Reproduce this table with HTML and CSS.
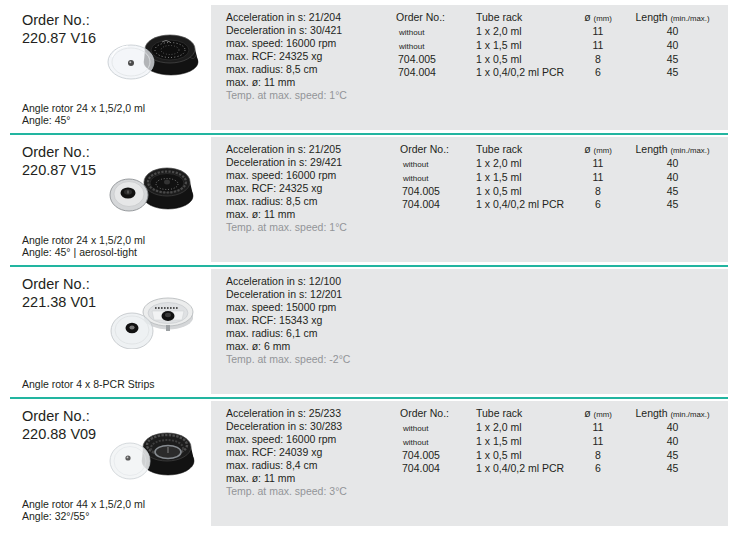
FILE: index.html
```html
<!DOCTYPE html>
<html lang="en">
<head>
<meta charset="utf-8">
<title>Angle rotors</title>
<link rel="stylesheet" href="styles.css">
</head>
<body>
<div class="page">

  <section class="row">
    <div class="left">
      <h2 class="ordno">Order No.:<br>220.87 V16</h2>
      <svg class="pic" viewBox="0 0 96 54" width="96" height="54">
        <ellipse cx="67" cy="31" rx="27" ry="13" fill="#0a0a0a" stroke="#2a2a2a" stroke-width="0.6"/>
        <path d="M41,18 L40,30 A27,13 0 0 0 94,30 L91,18 Z" fill="#121212"/>
        <path d="M86,26 Q90,30 92,24" fill="none" stroke="#3a3a3a" stroke-width="0.8"/>
        <ellipse cx="66" cy="18" rx="25" ry="14" fill="#1c1c1c" stroke="#4a4a4a" stroke-width="0.7"/>
        <ellipse cx="66" cy="19" rx="19" ry="10" fill="#0e0e0e" stroke="#2e2e2e" stroke-width="0.8"/>
        <ellipse cx="66" cy="19" rx="15" ry="7.5" fill="none" stroke="#cfcfcf" stroke-width="0.8" stroke-dasharray="0.8 2.4"/>
        <ellipse cx="66" cy="19" rx="9" ry="4.5" fill="none" stroke="#9a9a9a" stroke-width="0.6" stroke-dasharray="0.8 2"/>
        <path d="M58,11 q4,-3 8,0" fill="none" stroke="#bbb" stroke-width="0.6"/>
        <ellipse cx="27" cy="31" rx="23" ry="17" fill="rgba(240,243,246,0.72)" stroke="#c3c9ce" stroke-width="0.8"/>
        <ellipse cx="27" cy="31" rx="19" ry="14" fill="none" stroke="#dfe3e6" stroke-width="0.8"/>
        <path d="M8,26 Q12,16 24,15" fill="none" stroke="#ffffff" stroke-width="1.2"/>
        <circle cx="27" cy="32" r="3" fill="#4a4a4a"/>
        <circle cx="26.3" cy="31.2" r="1" fill="#bbb"/>
      </svg>
      <p class="desc">Angle rotor 24 x 1,5/2,0 ml<br>Angle: 45°</p>
    </div>
    <div class="panel">
      <div class="specs">
        <div>Acceleration in s: 21/204</div>
        <div>Deceleration in s: 30/421</div>
        <div>max. speed: 16000 rpm</div>
        <div>max. RCF: 24325 xg</div>
        <div>max. radius: 8,5 cm</div>
        <div>max. ø: 11 mm</div>
        <div class="muted">Temp. at max. speed: 1°C</div>
      </div>
      <div class="tbl">
        <div class="th">Order No.:</div><div class="th">Tube rack</div><div class="th c">ø <small>(mm)</small></div><div class="th c">Length <small>(min./max.)</small></div>
        <div class="no wo">without</div><div>1 x 2,0 ml</div><div class="c">11</div><div class="c">40</div>
        <div class="no wo">without</div><div>1 x 1,5 ml</div><div class="c">11</div><div class="c">40</div>
        <div class="no">704.005</div><div>1 x 0,5 ml</div><div class="c">8</div><div class="c">45</div>
        <div class="no">704.004</div><div>1 x 0,4/0,2 ml PCR</div><div class="c">6</div><div class="c">45</div>
      </div>
    </div>
  </section>
  <div class="sep"></div>

  <section class="row">
    <div class="left">
      <h2 class="ordno">Order No.:<br>220.87 V15</h2>
      <svg class="pic" viewBox="0 0 96 54" width="96" height="54">
        <ellipse cx="64" cy="33" rx="25" ry="13" fill="#0a0a0a" stroke="#2a2a2a" stroke-width="0.6"/>
        <path d="M40,19 L39,32 A25,13 0 0 0 89,32 L86,19 Z" fill="#121212"/>
        <ellipse cx="63" cy="19" rx="23" ry="14" fill="#1c1c1c" stroke="#444" stroke-width="0.7"/>
        <ellipse cx="63" cy="20" rx="17" ry="9.5" fill="#111" stroke="#2e2e2e" stroke-width="0.8"/>
        <ellipse cx="63" cy="19" rx="19" ry="10.5" fill="none" stroke="#4a4a4a" stroke-width="2.2" stroke-dasharray="2.2 1.4"/>
        <ellipse cx="63" cy="21" rx="11" ry="5.5" fill="none" stroke="#bdbdbd" stroke-width="0.7" stroke-dasharray="0.8 2"/>
        <ellipse cx="63" cy="19" rx="3" ry="2.5" fill="#333"/>
        <ellipse cx="25" cy="32" rx="19" ry="16" fill="#d5d7d9" stroke="#8f9295" stroke-width="0.9"/>
        <ellipse cx="25" cy="31" rx="15" ry="12.5" fill="#e6e7e8" stroke="#c2c4c6" stroke-width="0.6"/>
        <ellipse cx="24" cy="30" rx="7.5" ry="5.5" fill="#111"/>
        <ellipse cx="24" cy="29" rx="4" ry="2.8" fill="#2b2b2b"/>
        <rect x="23" y="27.5" width="2" height="3" fill="#555"/>
      </svg>
      <p class="desc">Angle rotor 24 x 1,5/2,0 ml<br>Angle: 45° | aerosol-tight</p>
    </div>
    <div class="panel">
      <div class="specs">
        <div>Acceleration in s: 21/205</div>
        <div>Deceleration in s: 29/421</div>
        <div>max. speed: 16000 rpm</div>
        <div>max. RCF: 24325 xg</div>
        <div>max. radius: 8,5 cm</div>
        <div>max. ø: 11 mm</div>
        <div class="muted">Temp. at max. speed: 1°C</div>
      </div>
      <div class="tbl shift">
        <div class="th">Order No.:</div><div class="th">Tube rack</div><div class="th c">ø <small>(mm)</small></div><div class="th c">Length <small>(min./max.)</small></div>
        <div class="no wo">without</div><div>1 x 2,0 ml</div><div class="c">11</div><div class="c">40</div>
        <div class="no wo">without</div><div>1 x 1,5 ml</div><div class="c">11</div><div class="c">40</div>
        <div class="no">704.005</div><div>1 x 0,5 ml</div><div class="c">8</div><div class="c">45</div>
        <div class="no">704.004</div><div>1 x 0,4/0,2 ml PCR</div><div class="c">6</div><div class="c">45</div>
      </div>
    </div>
  </section>
  <div class="sep"></div>

  <section class="row">
    <div class="left">
      <h2 class="ordno">Order No.:<br>221.38 V01</h2>
      <svg class="pic" viewBox="0 0 96 54" width="96" height="54">
        <path d="M40,17 L40,24 A25,13 0 0 0 89,24 L89,17 Z" fill="#d4d6d8"/>
        <ellipse cx="64" cy="17" rx="25" ry="14" fill="#eceded" stroke="#b4b7ba" stroke-width="0.8"/>
        <ellipse cx="64" cy="18" rx="20" ry="10.5" fill="#dfe1e3" stroke="#c5c8cb" stroke-width="0.6"/>
        <path d="M48,16 L80,16 L78,25 L50,25 Z" fill="#f1f2f3" stroke="#c9ccce" stroke-width="0.5"/>
        <line x1="51" y1="13" x2="75" y2="13" stroke="#222" stroke-width="1.6" stroke-dasharray="1.6 1.4"/>
        <rect x="62" y="30" width="4" height="6" fill="#9da1a4"/>
        <ellipse cx="64" cy="21" rx="6.5" ry="5" fill="#111"/>
        <ellipse cx="64" cy="20" rx="3" ry="2.2" fill="#3a3a3a"/>
        <ellipse cx="28" cy="36" rx="21" ry="18" fill="rgba(232,235,238,0.72)" stroke="#bfc3c7" stroke-width="0.8"/>
        <ellipse cx="28" cy="35" rx="17" ry="14" fill="none" stroke="#d8dbde" stroke-width="0.6"/>
        <ellipse cx="28" cy="33" rx="6.5" ry="5.2" fill="#111"/>
        <ellipse cx="28" cy="32.5" rx="2.6" ry="2" fill="#777"/>
      </svg>
      <p class="desc">Angle rotor 4 x 8-PCR Strips</p>
    </div>
    <div class="panel">
      <div class="specs">
        <div>Acceleration in s: 12/100</div>
        <div>Deceleration in s: 12/201</div>
        <div>max. speed: 15000 rpm</div>
        <div>max. RCF: 15343 xg</div>
        <div>max. radius: 6,1 cm</div>
        <div>max. ø: 6 mm</div>
        <div class="muted">Temp. at max. speed: -2°C</div>
      </div>
    </div>
  </section>
  <div class="sep"></div>

  <section class="row">
    <div class="left">
      <h2 class="ordno">Order No.:<br>220.88 V09</h2>
      <svg class="pic" viewBox="0 0 96 54" width="96" height="54">
        <ellipse cx="64" cy="34" rx="26" ry="14" fill="#0a0a0a" stroke="#2a2a2a" stroke-width="0.6"/>
        <path d="M39,20 L38,33 A26,14 0 0 0 90,33 L87,20 Z" fill="#121212"/>
        <ellipse cx="63" cy="20" rx="24" ry="14" fill="#1c1c1c" stroke="#444" stroke-width="0.7"/>
        <ellipse cx="63" cy="18" rx="20" ry="10" fill="none" stroke="#4d4d4d" stroke-width="2.4" stroke-dasharray="2.4 1.3"/>
        <ellipse cx="63" cy="21" rx="16" ry="8" fill="none" stroke="#3e3e3e" stroke-width="2" stroke-dasharray="2 1.3"/>
        <ellipse cx="64" cy="25" rx="13" ry="6.5" fill="#2b2b2b" stroke="#868b90" stroke-width="1.6"/>
        <line x1="64" y1="20" x2="64" y2="26" stroke="#9a9a9a" stroke-width="0.8"/>
        <ellipse cx="26" cy="34" rx="20" ry="18" fill="rgba(241,243,245,0.85)" stroke="#cbd0d4" stroke-width="0.8"/>
        <ellipse cx="26" cy="34" rx="16" ry="14.5" fill="none" stroke="#e1e4e7" stroke-width="0.6"/>
        <circle cx="24" cy="31" r="2.6" fill="#5a5a5a"/>
        <circle cx="23.5" cy="30.4" r="0.9" fill="#c8c8c8"/>
      </svg>
      <p class="desc">Angle rotor 44 x 1,5/2,0 ml<br>Angle: 32°/55°</p>
    </div>
    <div class="panel">
      <div class="specs">
        <div>Acceleration in s: 25/233</div>
        <div>Deceleration in s: 30/283</div>
        <div>max. speed: 16000 rpm</div>
        <div>max. RCF: 24039 xg</div>
        <div>max. radius: 8,4 cm</div>
        <div>max. ø: 11 mm</div>
        <div class="muted">Temp. at max. speed: 3°C</div>
      </div>
      <div class="tbl shift">
        <div class="th">Order No.:</div><div class="th">Tube rack</div><div class="th c">ø <small>(mm)</small></div><div class="th c">Length <small>(min./max.)</small></div>
        <div class="no wo">without</div><div>1 x 2,0 ml</div><div class="c">11</div><div class="c">40</div>
        <div class="no wo">without</div><div>1 x 1,5 ml</div><div class="c">11</div><div class="c">40</div>
        <div class="no">704.005</div><div>1 x 0,5 ml</div><div class="c">8</div><div class="c">45</div>
        <div class="no">704.004</div><div>1 x 0,4/0,2 ml PCR</div><div class="c">6</div><div class="c">45</div>
      </div>
    </div>
  </section>

</div>
</body>
</html>
```

FILE: styles.css
```css
html, body {
  margin: 0;
  padding: 0;
  background: #ffffff;
}

body {
  font-family: "Liberation Sans", Arial, sans-serif;
  color: #231f20;
}

.page {
  padding-top: 5px;
  width: 738px;
}

.row {
  display: grid;
  grid-template-columns: 211px 517px;
  height: 125px;
}

.left {
  display: grid;
  grid-template-columns: 82px 1fr;
  grid-template-rows: auto 1fr auto;
  padding: 6px 0 4px 22px;
  min-height: 0;
}

.ordno {
  grid-column: 1;
  grid-row: 1;
  margin: 0;
  font-weight: normal;
  font-size: 14.5px;
  line-height: 18px;
  white-space: nowrap;
}

.pic {
  grid-column: 2;
  grid-row: 1;
  margin-top: 20px;
  display: block;
}

.desc {
  grid-column: 1 / -1;
  grid-row: 3;
  align-self: end;
  margin: 0;
  font-size: 10.5px;
  line-height: 12px;
  white-space: nowrap;
}

.panel {
  background: #e6e7e8;
  display: grid;
  grid-template-columns: 170px auto;
  align-items: start;
  padding: 6px 0 0 15px;
  font-size: 10.5px;
  line-height: 13px;
}

.specs div {
  white-space: nowrap;
}

.muted {
  color: #939598;
}

.tbl {
  display: grid;
  grid-template-columns: 80px 105px 34px 115px;
  align-items: baseline;
  white-space: nowrap;
}

.tbl.shift {
  padding-left: 4px;
  grid-template-columns: 76px 105px 34px 115px;
}

.tbl .c {
  text-align: center;
}

.tbl small {
  font-size: 7.8px;
}

.tbl .no {
  padding-left: 2px;
}

.tbl .wo {
  font-size: 8px;
  padding-left: 3px;
}

.sep {
  height: 2px;
  margin: 3px 10px 2px 10px;
  background: #22b5a0;
}
```
